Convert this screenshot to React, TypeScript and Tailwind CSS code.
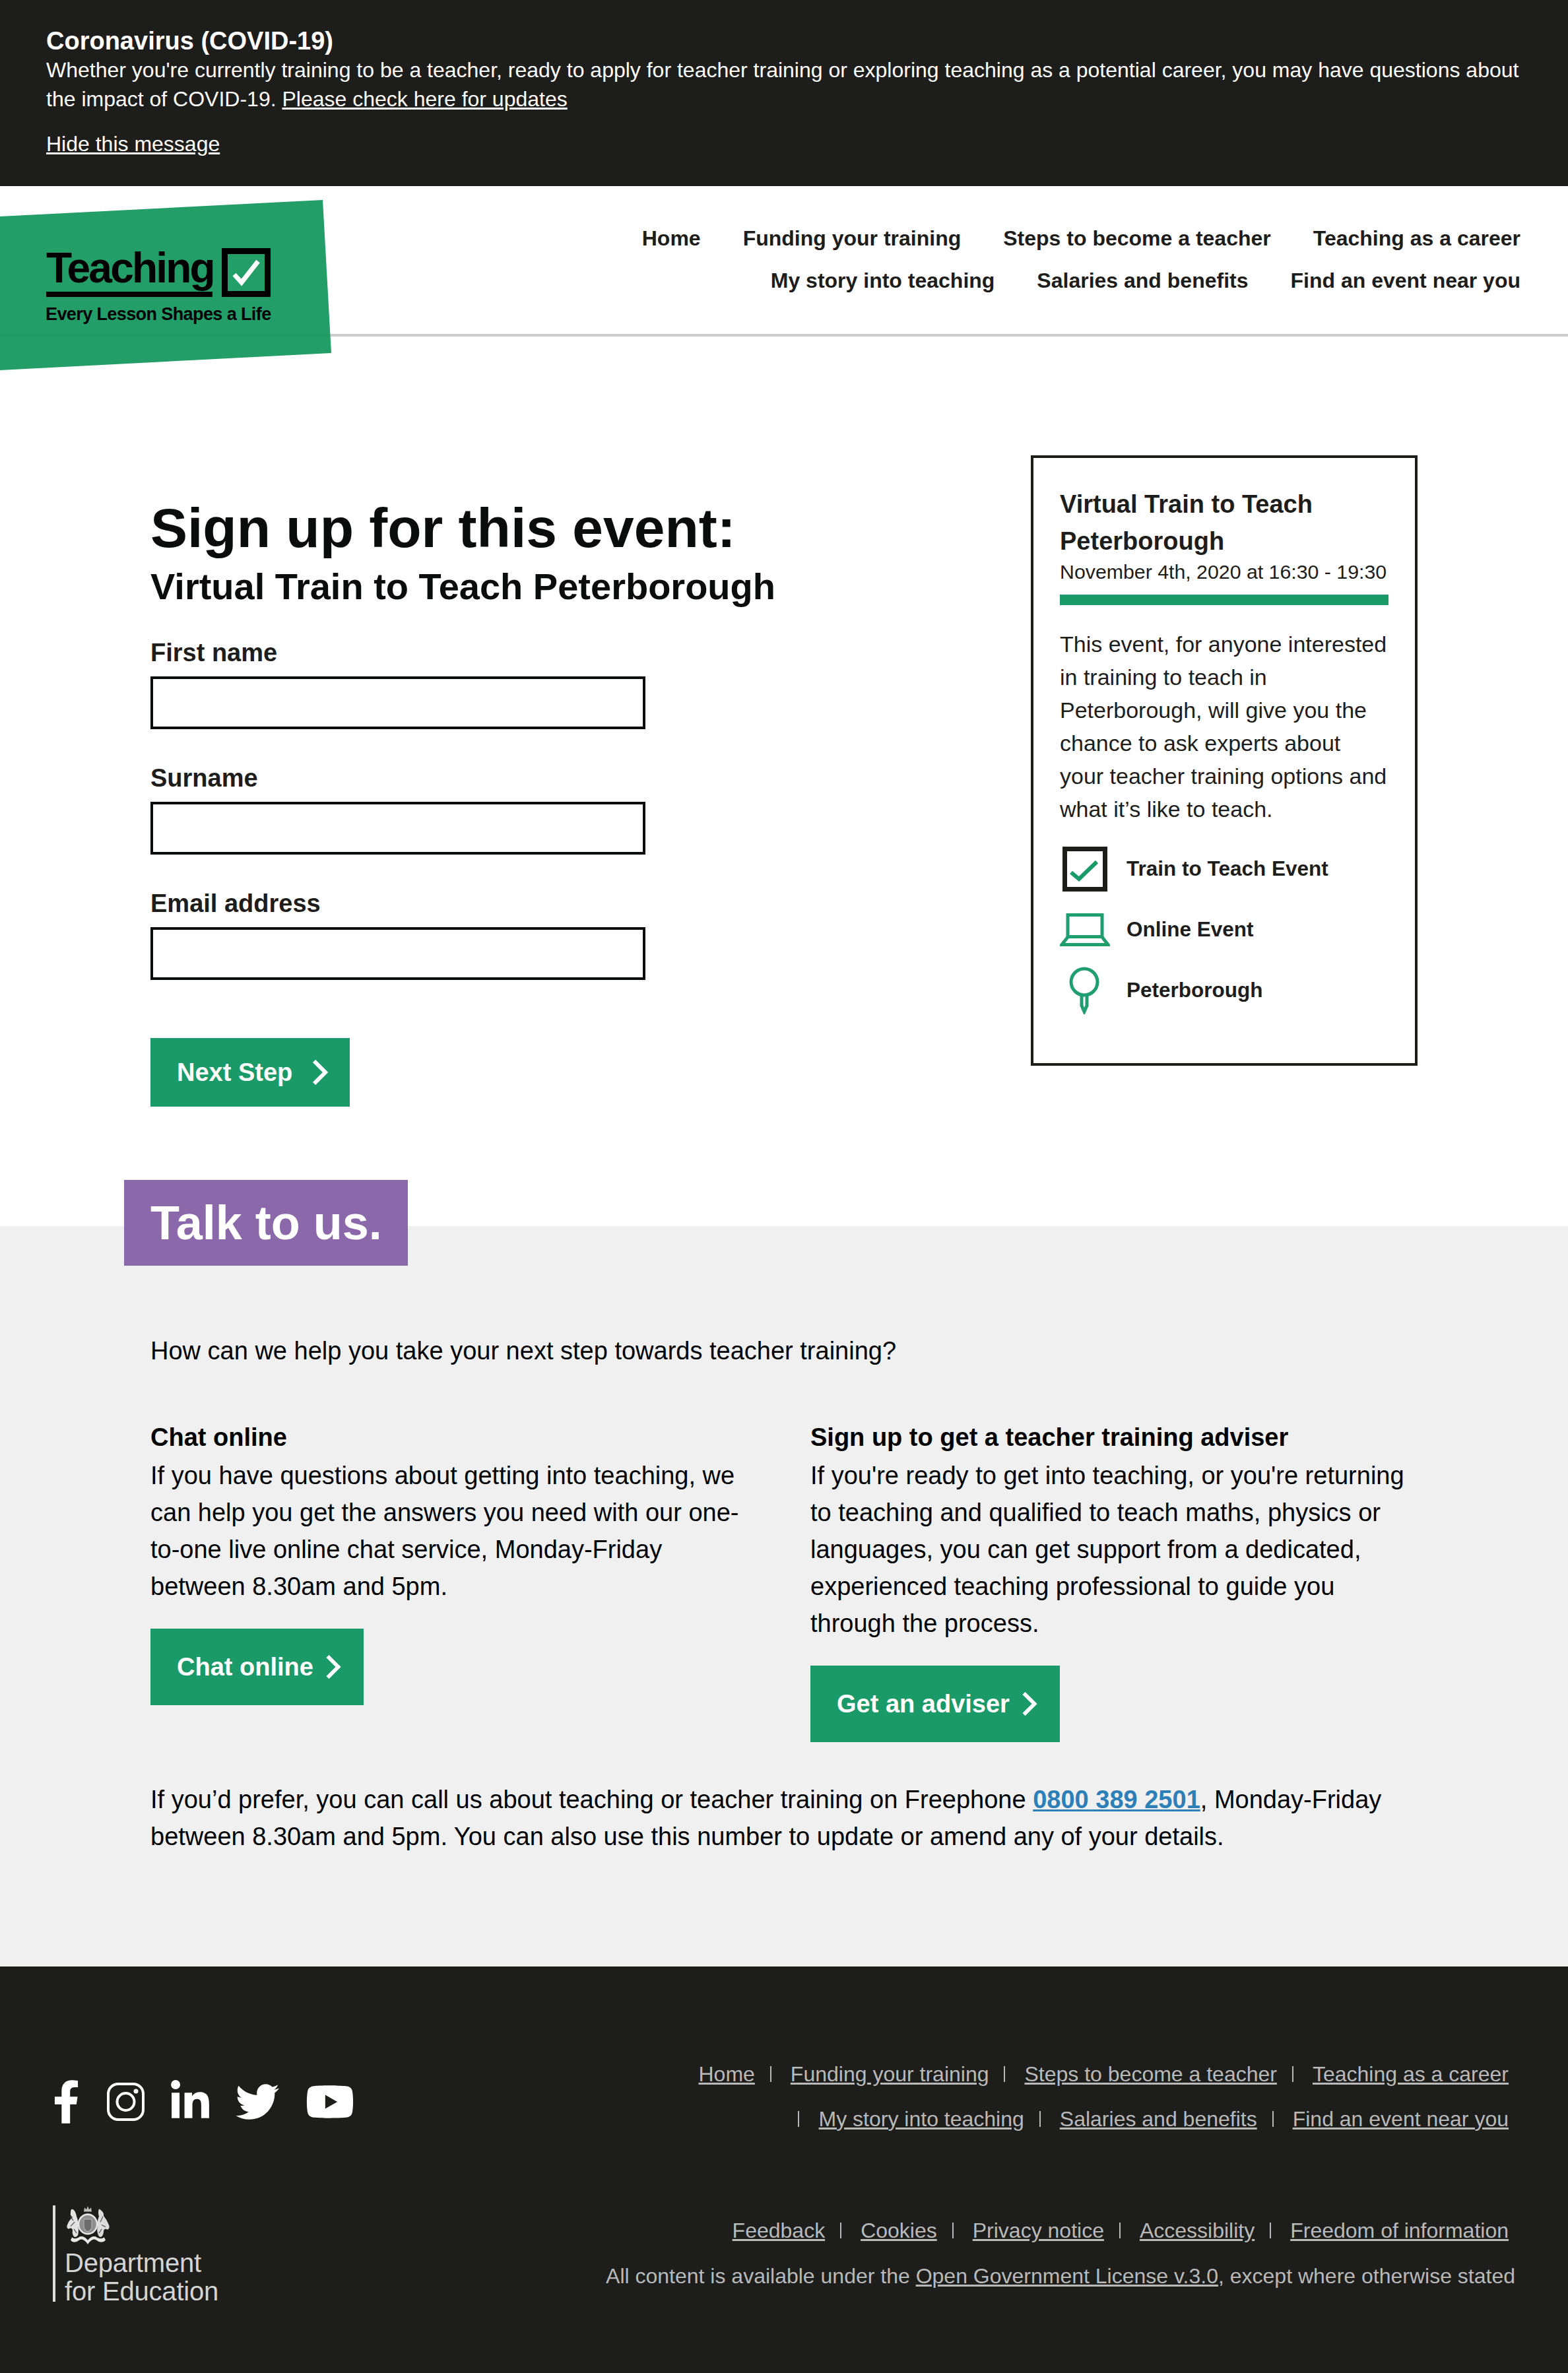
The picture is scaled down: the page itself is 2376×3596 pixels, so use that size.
import React from "react";
import { FaFacebookF, FaLinkedinIn, FaTwitter, FaYoutube } from "react-icons/fa";

const Chevron = ({ className = "" }: { className?: string }) => (
  <svg viewBox="0 0 24 38" className={className} fill="none" stroke="#fff" strokeWidth="6">
    <path d="M3 2 L20 19 L3 36" />
  </svg>
);

const Field = ({ label }: { label: string }) => (
  <div className="mb-[52px]">
    <div className="font-bold text-[38px] leading-[44px] mb-[14px] text-[#1d1d1b]">{label}</div>
    <div className="w-[750px] h-[80px] border-[4px] border-[#0b0c0c] bg-white" />
  </div>
);

const FootLinks = ({ items, className = "" }: { items: string[]; className?: string }) => (
  <div className={`flex flex-wrap justify-end leading-[68.5px] ${className}`}>
    {items.map((t, i) => (
      <div key={t} className="flex items-center">
        {i > 0 && <span className="ml-[23px] mr-[29px] w-[2px] h-[24px] bg-[#b7b7b7]" />}
        <a className="underline">{t}</a>
      </div>
    ))}
  </div>
);

const Crest = () => (
  <svg viewBox="0 0 70 57" preserveAspectRatio="none" className="w-[70px] h-[60px] block" fill="none">
    <path d="M29 9 L30 3 L33 6 L35 1 L37 6 L40 3 L41 9 Z" fill="#bdbdbd" />
    <circle cx="35" cy="27" r="14" fill="#8e8e8e" stroke="#e6e6e6" strokeWidth="2.5" />
    <path d="M29 20 H41 V29 Q41 36 35 38 Q29 36 29 29 Z" fill="#6d6d6d" stroke="#bbb" strokeWidth="1" />
    <path d="M13 6 Q9 4 9 10 Q8 15 12 17 Q6 22 4 28 Q2 32 6 34 Q11 31 12 36 Q11 41 14 45 Q17 47 20 43 Q22 36 20 30 Q21 22 18 16 Q17 9 13 6 Z" fill="#e2e2e2" />
    <path d="M52 5 Q60 9 59 15 Q64 21 67 28 Q69 33 65 35 Q60 32 59 37 Q59 42 56 45 Q53 47 51 43 Q48 36 50 30 Q49 22 52 16 Q50 10 52 5 Z" fill="#dcdcdc" />
    <path d="M9 16 L13 22 M15 24 L9 30 M58 16 L54 24 M56 28 L62 31 M14 34 L18 40 M56 34 L52 40" stroke="#555" strokeWidth="1.2" />
    <path d="M9 50 Q14 56 22 50 Q28 46 35 56 Q42 46 48 50 Q56 56 62 50 L60 46 Q53 50 47 45 Q41 43 35 50 Q29 43 23 45 Q17 50 11 46 Z" fill="#e8e8e8" />
  </svg>
);

export default function App() {
  return (
    <div className="w-[2376px] h-[3596px] overflow-hidden bg-white text-[#1d1d1b] [font-family:'Liberation_Sans',Arial,sans-serif]">
      {/* Covid banner */}
      <section className="h-[282px] bg-[#1d1d1b] text-white pl-[70px] pr-[70px] pt-[40px]">
        <h2 className="font-bold text-[38px] leading-[44px]">Coronavirus (COVID-19)</h2>
        <p className="text-[32px] leading-[44px]">
          Whether you're currently training to be a teacher, ready to apply for teacher training or exploring teaching as a potential career, you may have questions about the impact of COVID-19.{" "}
          <a className="underline">Please check here for updates</a>
        </p>
        <a className="block mt-[24px] text-[32px] leading-[44px] underline">Hide this message</a>
      </section>

      {/* Header */}
      <header className="relative h-[228px] border-b-[4px] border-[#cccccc] pt-[47px] pr-[72px]">
        <nav className="flex flex-col items-end font-bold text-[32px] leading-[64px]">
          <div className="flex gap-[64px]">
            <a>Home</a>
            <a>Funding your training</a>
            <a>Steps to become a teacher</a>
            <a>Teaching as a career</a>
          </div>
          <div className="flex gap-[64px]">
            <a>My story into teaching</a>
            <a>Salaries and benefits</a>
            <a>Find an event near you</a>
          </div>
        </nav>
        <div className="absolute left-0 top-[21px] w-[502px] h-[258px] text-black">
          <svg viewBox="0 0 502 258" className="absolute inset-0 w-full h-full">
            <polygon points="0,25 489,0 502,232 0,258" fill="#15985f" fillOpacity="0.94" />
          </svg>
          <div className="absolute left-[70px] top-[66px] font-bold text-[64px] leading-[74px] tracking-[-2.8px] whitespace-nowrap">Teaching</div>
          <div className="absolute left-[70px] top-[139px] w-[252px] h-[8px] bg-black" />
          <svg viewBox="0 0 74 74" className="absolute left-[336px] top-[73px] w-[74px] h-[74px]">
            <rect x="4.5" y="4.5" width="65" height="65" fill="none" stroke="#000" strokeWidth="9" />
            <path d="M19 40 L30 52 L55 20" fill="none" stroke="#fff" strokeWidth="7" />
          </svg>
          <div className="absolute left-[69px] top-[157px] font-bold text-[27px] leading-[32px] tracking-[-0.6px] whitespace-nowrap">Every Lesson Shapes a Life</div>
        </div>
      </header>

      {/* Main */}
      <main className="relative h-[1348px] pl-[228px]">
        <h1 className="pt-[242px] font-bold text-[84px] leading-[96px] text-[#0b0c0c]">Sign up for this event:</h1>
        <h2 className="font-bold text-[56px] leading-[70px] mt-[6px] mb-[43px] text-[#0b0c0c]">Virtual Train to Teach Peterborough</h2>
        <Field label="First name" />
        <Field label="Surname" />
        <Field label="Email address" />
        <a className="inline-flex items-center h-[104px] w-[302px] mt-[36px] pl-[40px] bg-[#1a9a68] text-white font-bold text-[38px]">
          <span>Next Step</span>
          <Chevron className="w-[24px] h-[38px] ml-[30px]" />
        </a>

        <aside className="absolute left-[1562px] top-[180px] w-[586px] h-[925px] border-[4px] border-[#1d1d1b] pl-[40px] pr-[40px] pt-[42px]">
          <h3 className="font-bold text-[38px] leading-[56px]">Virtual Train to Teach Peterborough</h3>
          <div className="text-[30.3px] leading-[36px] mt-[1px] whitespace-nowrap">November 4th, 2020 at 16:30 - 19:30</div>
          <div className="h-[16px] bg-[#1a9a68] mt-[16px] mb-[34px]" />
          <p className="text-[34px] leading-[50px]">This event, for anyone interested in training to teach in Peterborough, will give you the chance to ask experts about your teacher training options and what it’s like to teach.</p>
          <div className="mt-[20px] flex flex-col font-bold text-[31.5px]">
            <div className="flex items-center h-[92px]">
              <svg viewBox="0 0 76 68" className="w-[76px] h-[68px]">
                <rect x="7.5" y="3.5" width="61" height="61" fill="#fff" stroke="#1d1d1b" strokeWidth="7" />
                <path d="M17 39 L29 49 L56 23" fill="none" stroke="#1a9a68" strokeWidth="6" />
              </svg>
              <span className="ml-[25px]">Train to Teach Event</span>
            </div>
            <div className="flex items-center h-[92px]">
              <svg viewBox="0 0 76 50" className="w-[76px] h-[50px]" fill="none" stroke="#1f9e70" strokeWidth="5">
                <rect x="12" y="2.5" width="52" height="33" />
                <path d="M12 36 L3 47.5 H73 L64 36" />
              </svg>
              <span className="ml-[25px]">Online Event</span>
            </div>
            <div className="flex items-center h-[92px]">
              <svg viewBox="0 0 76 72" className="w-[76px] h-[72px]" fill="none" stroke="#1f9e70" strokeWidth="5">
                <circle cx="37" cy="23" r="20" />
                <path d="M33 43 V59 L37 68 L41 59 V43" />
              </svg>
              <span className="ml-[25px]">Peterborough</span>
            </div>
          </div>
        </aside>
      </main>

      {/* Talk to us */}
      <section className="h-[1122px] bg-[#f0f0f0] text-[38px] leading-[56px] text-black">
        <h2 className="relative -top-[70px] ml-[188px] w-[430px] h-[130px] bg-[#8a68a9] text-white font-bold text-[72px] leading-[130px] pl-[40px]">Talk to us.</h2>
        <div className="-mt-[70px] pl-[228px] pr-[230px] pt-[101px]">
          <p>How can we help you take your next step towards teacher training?</p>
          <div className="mt-[75px] flex items-start">
            <div className="w-[1000px] pr-[100px]">
              <h3 className="font-bold mb-[2px]">Chat online</h3>
              <p>If you have questions about getting into teaching, we can help you get the answers you need with our one-to-one live online chat service, Monday-Friday between 8.30am and 5pm.</p>
              <a className="mt-[36px] inline-flex items-center h-[116px] w-[323px] pl-[40px] bg-[#1a9a68] text-white font-bold text-[38px]">
                <span>Chat online</span>
                <Chevron className="w-[24px] h-[36px] ml-[18px]" />
              </a>
            </div>
            <div className="w-[918px]">
              <h3 className="font-bold mb-[2px]">Sign up to get a teacher training adviser</h3>
              <p>If you're ready to get into teaching, or you're returning to teaching and qualified to teach maths, physics or languages, you can get support from a dedicated, experienced teaching professional to guide you through the process.</p>
              <a className="mt-[36px] inline-flex items-center h-[116px] w-[378px] pl-[40px] bg-[#1a9a68] text-white font-bold text-[38px]">
                <span>Get an adviser</span>
                <Chevron className="w-[24px] h-[36px] ml-[18px]" />
              </a>
            </div>
          </div>
          <p className="mt-[59px]">
            If you’d prefer, you can call us about teaching or teacher training on Freephone{" "}
            <a className="font-bold underline text-[#2d7fb8]">0800 389 2501</a>, Monday-Friday between 8.30am and 5pm. You can also use this number to update or amend any of your details.
          </p>
        </div>
      </section>

      {/* Footer */}
      <footer className="h-[616px] bg-[#1d1d1b] text-[#b9b9b9] flex justify-between pl-[80px] pr-[80px]">
        <div>
          <div className="mt-[172px] flex items-center h-[66px] text-white">
            <FaFacebookF className="w-[41px] h-[66px]" />
            <svg viewBox="0 0 57 58" className="ml-[41px] w-[57px] h-[58px]" fill="none" stroke="#fff">
              <rect x="2" y="2" width="53" height="54" rx="15" strokeWidth="4" />
              <circle cx="28.5" cy="29" r="13" strokeWidth="4" />
              <circle cx="44" cy="13" r="3.5" fill="#fff" stroke="none" />
            </svg>
            <FaLinkedinIn className="ml-[40px] w-[58px] h-[66px]" />
            <FaTwitter className="ml-[40px] w-[66px] h-[66px]" />
            <FaYoutube className="ml-[40px] w-[74px] h-[66px]" />
          </div>
          <div className="mt-[124px] w-[260px] h-[146px] border-l-[4px] border-[#dddddd] pl-[14px] text-[#d4d4d4]">
            <Crest />
            <div className="text-[40px] leading-[43px] mt-[6px] tracking-[-0.2px] whitespace-nowrap">Department<br />for Education</div>
          </div>
        </div>
        <div className="text-[32px]">
          <FootLinks className="mt-[129px] w-[1300px] ml-auto mr-[10px]" items={["Home", "Funding your training", "Steps to become a teacher", "Teaching as a career"]} />
          <FootLinks className="mt-[-1px] w-[1300px] ml-auto mr-[10px] [&>div:first-child]:before:content-[''] [&>div:first-child]:before:w-[2px] [&>div:first-child]:before:h-[24px] [&>div:first-child]:before:bg-[#b7b7b7] [&>div:first-child]:before:mr-[30px]" items={["My story into teaching", "Salaries and benefits", "Find an event near you"]} />
          <FootLinks className="mt-[101px] w-[1300px] ml-auto mr-[10px]" items={["Feedback", "Cookies", "Privacy notice", "Accessibility", "Freedom of information"]} />
          <p className="leading-[68px] text-right">All content is available under the <a className="underline">Open Government License v.3.0</a>, except where otherwise stated</p>
        </div>
      </footer>
    </div>
  );
}
